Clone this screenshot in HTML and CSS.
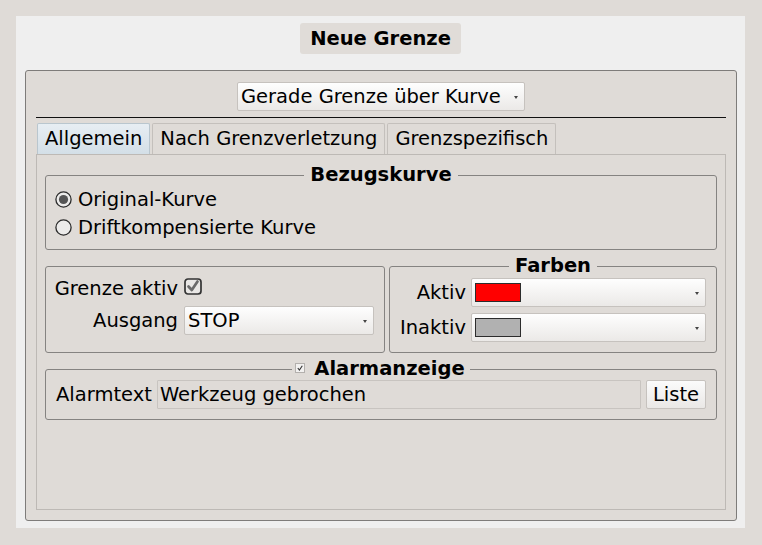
FILE: index.html
```html
<!DOCTYPE html>
<html lang="de">
<head>
<meta charset="utf-8">
<title>Neue Grenze</title>
<link rel="stylesheet" href="styles.css">
</head>
<body>
<div class="window">
  <div class="title">Neue Grenze</div>
  <div class="group">
    <div class="combo main-combo"><span class="txt">Gerade Grenze über Kurve</span><i class="arrow"></i></div>
    <div class="sep"></div>
    <div class="tabs">
      <div class="tab active">Allgemein</div>
      <div class="tab">Nach Grenzverletzung</div>
      <div class="tab">Grenzspezifisch</div>
    </div>
    <div class="pane">
      <div class="gbox bezug">
        <div class="gtitle">Bezugskurve</div>
        <div class="radio-row">
          <svg class="radio" width="17" height="17" viewBox="0 0 17 17"><circle cx="8.5" cy="8.5" r="7.6" fill="#ecebea" stroke="#2b2b2b" stroke-width="1.3"/><circle cx="8.5" cy="8.5" r="4.6" fill="#555"/></svg>
          <span>Original-Kurve</span>
        </div>
        <div class="radio-row">
          <svg class="radio" width="17" height="17" viewBox="0 0 17 17"><circle cx="8.5" cy="8.5" r="7.6" fill="#ecebea" stroke="#2b2b2b" stroke-width="1.3"/></svg>
          <span>Driftkompensierte Kurve</span>
        </div>
      </div>
      <div class="row2">
        <div class="gbox aktiv-box">
          <div class="form-left">
            <span class="lbl">Grenze aktiv</span>
            <svg class="check" width="18" height="17" viewBox="0 0 18 17"><rect x="1" y="1" width="16" height="15" rx="3" fill="#e9e7e5" stroke="#333" stroke-width="1.7"/><path d="M4.5 8.5 L7.8 12 L13.5 3.5" fill="none" stroke="#6a6a6a" stroke-width="2.7" stroke-linecap="round" stroke-linejoin="round"/></svg>
            <span class="lbl">Ausgang</span>
            <div class="combo"><span class="txt">STOP</span><i class="arrow"></i></div>
          </div>
        </div>
        <div class="gbox farben">
          <div class="gtitle">Farben</div>
          <div class="form-right">
            <span class="lbl">Aktiv</span>
            <div class="combo color-combo"><span class="swatch red"></span><span class="txt"></span><i class="arrow"></i></div>
            <span class="lbl">Inaktiv</span>
            <div class="combo color-combo"><span class="swatch grey"></span><span class="txt"></span><i class="arrow"></i></div>
          </div>
        </div>
      </div>
      <div class="gbox alarm">
        <div class="gtitle alarm-title">
          <svg class="mini-check" width="10" height="10" viewBox="0 0 10 10"><rect x="0.5" y="0.5" width="9" height="9" fill="#f2f1f0" stroke="#b3b0ad"/><path d="M2.8 5 L4.4 7 L7.3 2.8" fill="none" stroke="#333" stroke-width="1.1"/></svg>
          <span>Alarmanzeige</span>
        </div>
        <div class="alarm-row">
          <span class="lbl">Alarmtext</span>
          <div class="field">Werkzeug gebrochen</div>
          <div class="button">Liste</div>
        </div>
      </div>
    </div>
  </div>
</div>
</body>
</html>
```
FILE: styles.css
```css
* { box-sizing: border-box; }

body {
  margin: 0;
  background: #dfdbd7;
  font-family: "DejaVu Sans", "Noto Sans", sans-serif;
  font-size: 19.5px;
  color: #000;
}

.window {
  margin: 16px 0 0 16px;
  width: 729px;
  height: 512px;
  background: #efefef;
  display: flex;
  flex-direction: column;
  align-items: flex-start;
}

.title {
  align-self: center;
  margin-top: 7px;
  height: 31px;
  line-height: 31px;
  padding: 0 10px;
  background: #e0dcd8;
  border-radius: 3px;
  font-weight: bold;
  font-size: 19.5px;
}

.group {
  margin: 16px 0 0 9px;
  width: 712px;
  height: 451px;
  border: 1px solid #7e7c7a;
  border-radius: 3px;
  background: #dfdbd7;
  padding: 11px 10px 10px;
  display: flex;
  flex-direction: column;
}

.combo {
  height: 29px;
  border: 1px solid #c6c2be;
  border-radius: 2px;
  background: linear-gradient(#fefefe, #ebe9e7);
  display: flex;
  align-items: center;
  padding: 0 6px 0 3px;
  line-height: 27px;
}
.combo .txt { flex: 1; white-space: nowrap; }
.arrow {
  width: 0;
  height: 0;
  border-left: 2.5px solid transparent;
  border-right: 2.5px solid transparent;
  border-top: 3px solid #444;
  margin-top: 1px;
}

.main-combo {
  align-self: center;
  width: 288px;
}

.sep {
  margin-top: 6px;
  height: 1px;
  background: #111;
  flex: none;
}

.tabs {
  margin-top: 5px;
  display: flex;
  gap: 2px;
  padding-left: 1px;
  flex: none;
}
.tab {
  height: 31px;
  line-height: 30px;
  padding: 0 7px;
  border: 1px solid #c4c0bc;
  border-bottom: none;
  border-radius: 2px 2px 0 0;
  background: #dfdbd7;
  white-space: nowrap;
}
.tab.active {
  background: linear-gradient(#e7eef3, #d3dfe7);
  border-color: #b9c6ce;
}

.pane {
  flex: 1;
  border: 1px solid #bdb9b5;
  padding: 0 8px 0 8px;
  display: flex;
  flex-direction: column;
}

.gbox {
  border: 1px solid #858381;
  border-radius: 3px;
}
.gtitle {
  margin: -11px auto 0;
  width: fit-content;
  padding: 0 6px;
  line-height: 20px;
  font-weight: bold;
  font-size: 19.5px;
  background: #dfdbd7;
  white-space: nowrap;
}

.bezug {
  margin-top: 20px;
  padding: 0 9px 8px;
}
.radio-row {
  height: 28px;
  display: flex;
  align-items: center;
  gap: 6px;
}
.radio { flex: none; }

.row2 {
  margin-top: 16px;
  display: grid;
  grid-template-columns: 340px 328px;
  column-gap: 4px;
}

.aktiv-box {
  padding: 10px 10px 10px;
}
.form-left {
  display: grid;
  grid-template-columns: 122px 1fr;
  grid-template-rows: 22px 29px;
  column-gap: 6px;
  row-gap: 7px;
  align-items: center;
}
.lbl {
  justify-self: end;
  white-space: nowrap;
}
.check { justify-self: start; margin-top: -3px; }

.farben {
  padding: 0 10px 10px;
}
.form-right {
  margin-top: 2px;
  display: grid;
  grid-template-columns: auto 1fr;
  grid-template-rows: 29px 29px;
  column-gap: 5px;
  row-gap: 6px;
  align-items: center;
}
.color-combo { padding-left: 3px; }
.swatch {
  width: 46px;
  height: 19px;
  border: 1px solid #2c2c2c;
  flex: none;
}
.swatch.red { background: #ff0000; }
.swatch.grey { background: #b1b1b1; }

.alarm {
  margin-top: 16px;
  padding: 0 10px 10px;
}
.alarm-title {
  display: flex;
  align-items: center;
  gap: 9px;
  padding: 0 5px 0 3px;
}
.mini-check { flex: none; margin-top: -2px; }
.alarm-row {
  margin-top: 1px;
  display: flex;
  align-items: center;
  gap: 5px;
}
.field {
  flex: 1;
  height: 29px;
  line-height: 27px;
  border: 1px solid #c8c4c0;
  border-radius: 1px;
  background: #dfdbd7;
  padding: 0 2px;
  white-space: nowrap;
}
.button {
  width: 60px;
  height: 29px;
  line-height: 27px;
  text-align: center;
  border: 1px solid #c6c2be;
  border-radius: 2px;
  background: linear-gradient(#fbfbfb, #eae8e6);
}
```
